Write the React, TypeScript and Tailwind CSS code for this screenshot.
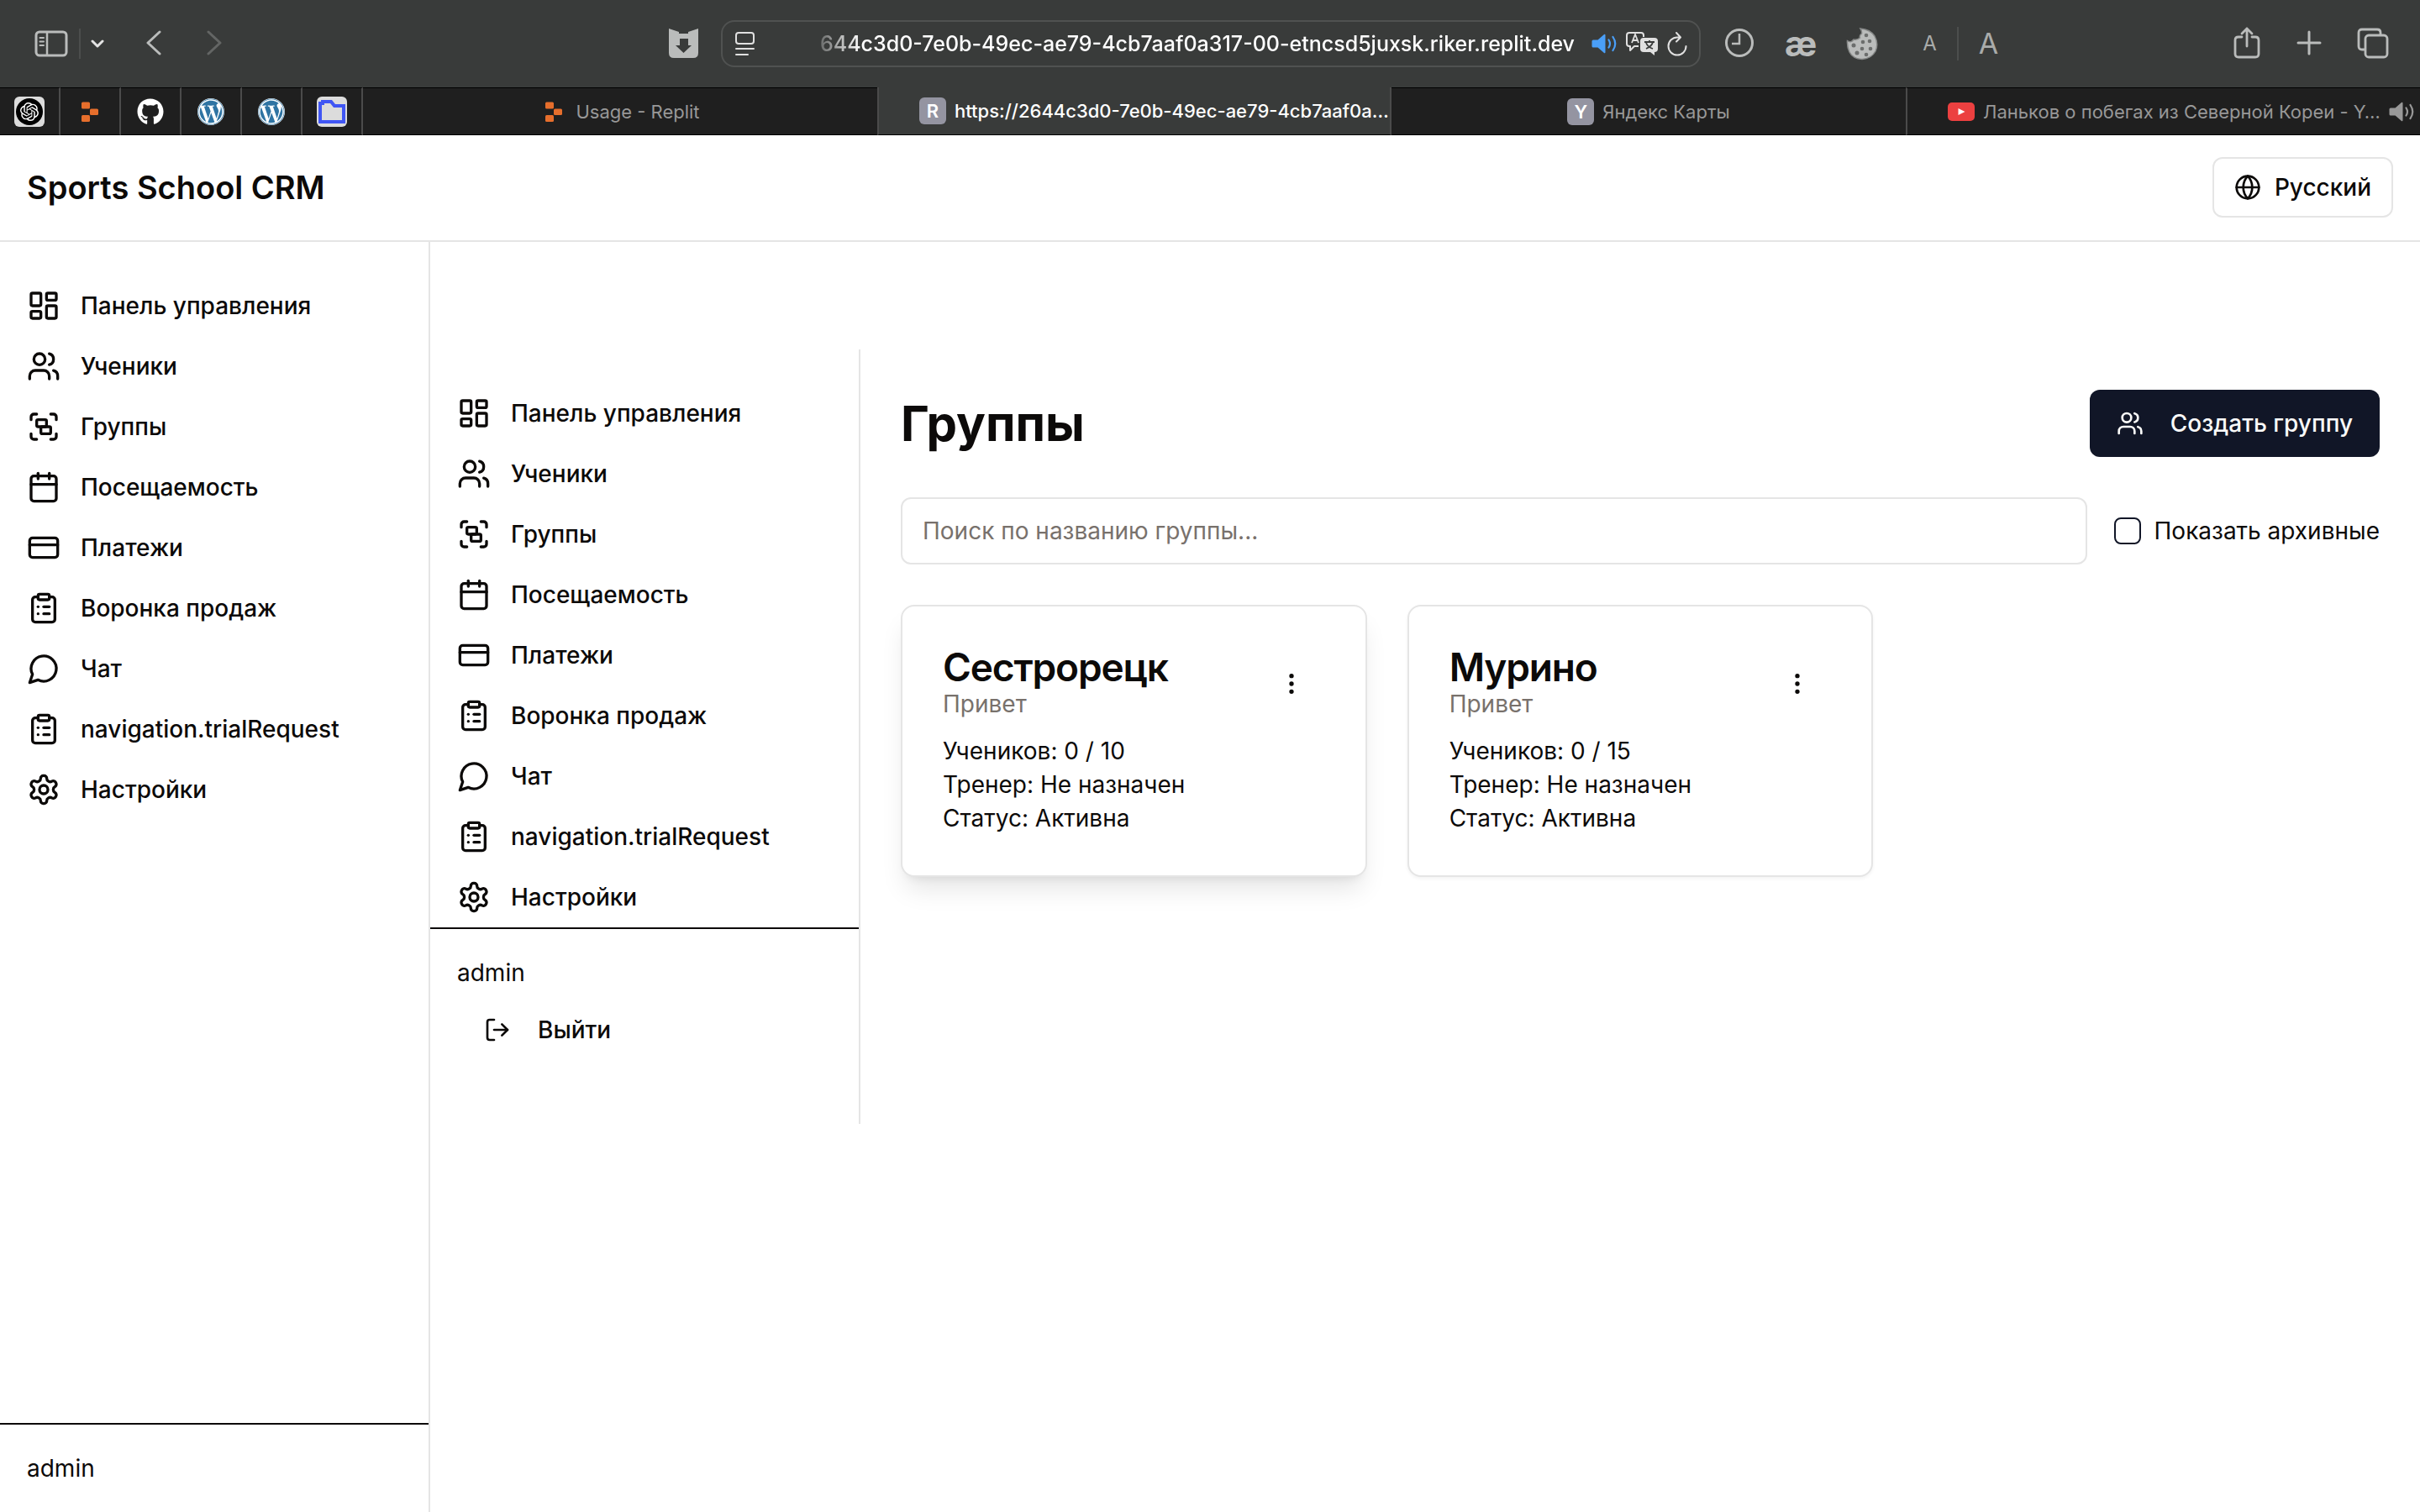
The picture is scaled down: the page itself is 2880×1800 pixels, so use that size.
import type { ReactNode } from "react";
import {
  Calendar,
  ClipboardList,
  CreditCard,
  EllipsisVertical,
  Globe,
  Group,
  LayoutDashboard,
  LogOut,
  Users,
} from "lucide-react";
import { FaGithub, FaWordpress } from "react-icons/fa";

function Stroke({ children, className = "size-10" }: { children: ReactNode; className?: string }) {
  return (
    <svg
      viewBox="0 0 24 24"
      fill="none"
      stroke="currentColor"
      strokeWidth="2"
      strokeLinecap="round"
      strokeLinejoin="round"
      className={className}
      aria-hidden="true"
    >
      {children}
    </svg>
  );
}

function ChatIcon() {
  return (
    <Stroke>
      <path d="M7.9 20A9 9 0 1 0 4 16.1L2 22Z" />
    </Stroke>
  );
}

function GearIcon() {
  return (
    <Stroke>
      <path d="M12.22 2h-.44a2 2 0 0 0-2 2v.18a2 2 0 0 1-1 1.73l-.43.25a2 2 0 0 1-2 0l-.15-.08a2 2 0 0 0-2.73.73l-.22.38a2 2 0 0 0 .73 2.73l.15.1a2 2 0 0 1 1 1.72v.51a2 2 0 0 1-1 1.74l-.15.09a2 2 0 0 0-.73 2.73l.22.38a2 2 0 0 0 2.73.73l.15-.08a2 2 0 0 1 2 0l.43.25a2 2 0 0 1 1 1.73V20a2 2 0 0 0 2 2h.44a2 2 0 0 0 2-2v-.18a2 2 0 0 1 1-1.73l.43-.25a2 2 0 0 1 2 0l.15.08a2 2 0 0 0 2.73-.73l.22-.39a2 2 0 0 0-.73-2.73l-.15-.08a2 2 0 0 1-1-1.74v-.5a2 2 0 0 1 1-1.74l.15-.09a2 2 0 0 0 .73-2.73l-.22-.38a2 2 0 0 0-2.73-.73l-.15.08a2 2 0 0 1-2 0l-.43-.25a2 2 0 0 1-1-1.73V4a2 2 0 0 0-2-2z" />
      <circle cx="12" cy="12" r="3" />
    </Stroke>
  );
}

function OpenAiFavicon() {
  return (
    <span className="grid size-9 place-items-center rounded-md bg-[#dcdcdc]">
      <span className="grid size-8 place-items-center rounded-full bg-black text-white">
        <svg viewBox="0 0 24 24" fill="currentColor" className="size-[22px]" aria-hidden="true">
          <path d="M22.2819 9.8211a5.9847 5.9847 0 0 0-.5157-4.9108 6.0462 6.0462 0 0 0-6.5098-2.9A6.0651 6.0651 0 0 0 4.9807 4.1818a5.9847 5.9847 0 0 0-3.9977 2.9 6.0462 6.0462 0 0 0 .7427 7.0966 5.98 5.98 0 0 0 .511 4.9107 6.051 6.051 0 0 0 6.5146 2.9001A5.9847 5.9847 0 0 0 13.2599 24a6.0557 6.0557 0 0 0 5.7718-4.2058 5.9894 5.9894 0 0 0 3.9977-2.9001 6.0557 6.0557 0 0 0-.7475-7.0729zm-9.022 12.6081a4.4755 4.4755 0 0 1-2.8764-1.0408l.1419-.0804 4.7783-2.7582a.7948.7948 0 0 0 .3927-.6813v-6.7369l2.02 1.1686a.071.071 0 0 1 .038.052v5.5826a4.504 4.504 0 0 1-4.4945 4.4944zm-9.6607-4.1254a4.4708 4.4708 0 0 1-.5346-3.0137l.142.0852 4.783 2.7582a.7712.7712 0 0 0 .7806 0l5.8428-3.3685v2.3324a.0804.0804 0 0 1-.0332.0615L9.74 19.9502a4.4992 4.4992 0 0 1-6.1408-1.6464zM2.3408 7.8956a4.485 4.485 0 0 1 2.3655-1.9728V11.6a.7664.7664 0 0 0 .3879.6765l5.8144 3.3543-2.0201 1.1685a.0757.0757 0 0 1-.071 0l-4.8303-2.7865A4.504 4.504 0 0 1 2.3408 7.872zm16.5963 3.8558L13.1038 8.364 15.1192 7.2a.0757.0757 0 0 1 .071 0l4.8303 2.7913a4.4944 4.4944 0 0 1-.6765 8.1042v-5.6772a.79.79 0 0 0-.407-.667zm2.0107-3.0231l-.142-.0852-4.7735-2.7818a.7759.7759 0 0 0-.7854 0L9.409 9.2297V6.8974a.0662.0662 0 0 1 .0284-.0615l4.8303-2.7866a4.4992 4.4992 0 0 1 6.6802 4.66zM8.3065 12.863l-2.02-1.1638a.0804.0804 0 0 1-.038-.0567V6.0742a4.4992 4.4992 0 0 1 7.3757-3.4537l-.142.0805L8.704 5.459a.7948.7948 0 0 0-.3927.6813zm1.0976-2.3654l2.602-1.4998 2.6069 1.4998v2.9994l-2.5974 1.4997-2.6067-1.4997Z" />
        </svg>
      </span>
    </span>
  );
}

function ReplitFavicon() {
  return (
    <svg viewBox="0 0 32 32" fill="#e66e2c" className="size-8" aria-hidden="true">
      <rect x="6" y="4.500" width="10" height="8" rx="1.500" />
      <rect x="16" y="12.500" width="10" height="7.500" rx="1.500" />
      <rect x="6" y="20" width="10" height="8" rx="1.500" />
    </svg>
  );
}

function WordpressFavicon() {
  return (
    <span className="grid size-8 place-items-center rounded-full bg-white">
      <FaWordpress className="size-8 text-[#2f74a3]" />
    </span>
  );
}

function FolderFavicon() {
  return (
    <span className="grid size-9 place-items-center rounded-md bg-[#dcdcdc]">
      <svg viewBox="0 0 36 36" fill="none" className="size-9" aria-hidden="true">
        <path
          d="M4 30V8h3V6h10l4 5h11v19z"
          fill="none"
          stroke="#4056f4"
          strokeWidth="4"
        />
      </svg>
    </span>
  );
}

function LetterFavicon({ letter }: { letter: string }) {
  return (
    <span className="grid size-8 shrink-0 place-items-center rounded-md bg-[#9494a1] text-[22px] leading-8 font-semibold text-white">
      {letter}
    </span>
  );
}

function YoutubeFavicon() {
  return (
    <svg viewBox="0 0 32 32" className="size-8 shrink-0" aria-hidden="true">
      <rect x="0" y="5" width="32" height="22" rx="5" fill="#ec4040" />
      <path d="M12.500 12v8l8-4z" fill="#fff" />
    </svg>
  );
}

function SpeakerIcon({ className }: { className: string }) {
  return (
    <svg viewBox="0 0 32 32" fill="none" className={className} aria-hidden="true">
      <path d="M2 11.500h5.500L15 5q1.500-.8 1.500 1v20q0 1.800-1.500 1l-7.500-6.500H2q-1.500 0-1.500-1.500v-6q0-1.500 1.500-1.500z" fill="currentColor" />
      <path d="M20.500 11.500q3 4.500 0 9M25.500 8q5.500 8 0 16" stroke="currentColor" strokeWidth="2.200" strokeLinecap="round" />
    </svg>
  );
}

const pinned = [
  { label: "ChatGPT", icon: <OpenAiFavicon /> },
  { label: "Replit", icon: <ReplitFavicon /> },
  { label: "GitHub", icon: <FaGithub className="size-8 text-white" /> },
  { label: "WordPress", icon: <WordpressFavicon /> },
  { label: "WordPress", icon: <WordpressFavicon /> },
  { label: "Files", icon: <FolderFavicon /> },
];

function Toolbar() {
  return (
    <div className="flex h-26 items-center bg-[#393b3a] pr-9 pl-10 text-[#babcbb]">
      <div className="flex w-[756px] items-center">
        <button type="button" aria-label="Sidebar">
          <svg viewBox="0 0 42 36" fill="none" stroke="currentColor" className="h-9 w-[42px]" aria-hidden="true">
            <rect x="3" y="4" width="36" height="28" rx="4" strokeWidth="3" />
            <path d="M16 4v28" strokeWidth="2.500" />
            <path d="M7.500 11h4.500M7.500 15.500h4.500M7.500 20h4.500" strokeWidth="2" strokeLinecap="round" />
          </svg>
        </button>
        <span className="ml-3 h-9 w-0.5 bg-[#4c4e4d]" />
        <button type="button" aria-label="Tab groups" className="ml-3 text-[#e4e4e4]">
          <svg viewBox="0 0 16 16" fill="none" stroke="currentColor" strokeWidth="3" strokeLinecap="round" strokeLinejoin="round" className="size-4" aria-hidden="true">
            <path d="M2 5l6 6 6-6" />
          </svg>
        </button>
        <button type="button" aria-label="Back" className="ml-12">
          <svg viewBox="0 0 24 32" fill="none" stroke="currentColor" strokeWidth="3" strokeLinecap="round" strokeLinejoin="round" className="h-8 w-6" aria-hidden="true">
            <path d="M18 2L4 15l14 13" />
          </svg>
        </button>
        <button type="button" aria-label="Forward" className="ml-12 text-[#636564]">
          <svg viewBox="0 0 24 32" fill="none" stroke="currentColor" strokeWidth="3" strokeLinecap="round" strokeLinejoin="round" className="h-8 w-6" aria-hidden="true">
            <path d="M4 2l14 13L4 28" />
          </svg>
        </button>
      </div>

      <div className="flex items-center">
        <button type="button" aria-label="Downloads shield">
          <svg viewBox="0 0 36 36" className="size-9" aria-hidden="true">
            <path d="M0 0l12 4v2h11V4l12-4v29q0 6-6 6H6q-6 0-6-6z" fill="currentColor" />
            <path d="M13 12h10v8h4l-9.500 9L8 20h5z" fill="#393b3a" />
          </svg>
        </button>
        <div className="ml-6.5 flex h-14 w-[1166px] items-center rounded-2xl border-2 border-[#505251] px-3 text-[#e0e0e0]">
          <svg viewBox="0 0 28 32" fill="none" stroke="currentColor" strokeWidth="2" strokeLinecap="round" className="h-8 w-7" aria-hidden="true">
            <rect x="4" y="3" width="21" height="13" rx="3" />
            <path d="M4 22h21M4 29h14" />
          </svg>
          <input
            type="text"
            aria-label="Address"
            readOnly
            value="644c3d0-7e0b-49ec-ae79-4cb7aaf0a317-00-etncsd5juxsk.riker.replit.dev"
            className="mr-5 ml-15 h-12 min-w-0 flex-1 bg-transparent text-right text-[25px] font-medium text-white outline-none [mask-image:linear-gradient(to_right,transparent,black_64px)]"
          />
          <SpeakerIcon className="size-8 text-[#4a9ff8]" />
          <svg viewBox="0 0 40 32" fill="none" className="ml-2 h-8 w-10" aria-hidden="true">
            <path d="M22 8V6q0-3-3-3H5Q2 3 2 6v10q0 3 3 3h1v5l5-5h5" stroke="currentColor" strokeWidth="2" strokeLinejoin="round" />
            <path d="M8 15l4-10 4 10M9.500 12h5" stroke="currentColor" strokeWidth="1.800" />
            <path d="M22 9h13q4 0 4 4v9q0 4-4 4v4l-5-4h-8q-4 0-4-4v-9q0-4 4-4z" fill="currentColor" />
            <path d="M23 14h12M29 12v2M25 22q7-3 8-8M25 15q2 5 8 7" stroke="#393b3a" strokeWidth="1.800" />
          </svg>
          <svg viewBox="0 0 28 32" fill="none" stroke="currentColor" strokeWidth="2" strokeLinecap="round" strokeLinejoin="round" className="ml-2 h-8 w-7" aria-hidden="true">
            <path d="M18 8.500h-4a10.500 10.500 0 1 0 10.500 10.500M13 3l5 5.500-5 5" />
          </svg>
        </div>
        <button type="button" aria-label="History" className="ml-7">
          <svg viewBox="0 0 36 36" fill="none" stroke="currentColor" strokeWidth="3" className="size-9" aria-hidden="true">
            <circle cx="18" cy="17" r="15.500" />
            <path d="M18 6v12H9" strokeWidth="2.500" />
          </svg>
        </button>
        <button type="button" aria-label="Ligature" className="ml-9 text-[42px] leading-12 font-bold">
          æ
        </button>
        <button type="button" aria-label="Cookies" className="ml-8.5">
          <svg viewBox="0 0 40 40" className="size-10" aria-hidden="true">
            <path
              d="M18 2Q30 3 35 11Q40 20 36 29Q31 38 20 38.500Q9 38 5 30Q2 24 2.500 16.500Q7 19.500 10 15Q14 16 17.500 13Q16.500 10 19.500 8Q20 5 18 2Z"
              fill="currentColor"
              stroke="#858786"
              strokeWidth="1.500"
            />
            <g fill="#6c6e6d">
              <circle cx="25" cy="10" r="2.300" />
              <circle cx="21" cy="18" r="2.300" />
              <circle cx="29" cy="17" r="2.300" />
              <circle cx="10" cy="22" r="2.500" />
              <circle cx="20" cy="26" r="2.300" />
              <circle cx="30" cy="26" r="2.300" />
              <circle cx="14" cy="31" r="2.500" />
              <circle cx="25" cy="33" r="2.300" />
            </g>
          </svg>
        </button>
      </div>

      <div className="ml-13 flex items-center text-[#a9abaa]">
        <button type="button" aria-label="Smaller text" className="text-2xl">
          A
        </button>
        <span className="mx-6 h-10 w-0.5 bg-[#4c4e4d]" />
        <button type="button" aria-label="Larger text" className="text-[34px] leading-10">
          A
        </button>
      </div>

      <div className="ml-auto flex items-center gap-9.5">
        <button type="button" aria-label="Share">
          <svg viewBox="0 0 36 40" fill="none" stroke="currentColor" strokeWidth="2.800" strokeLinecap="round" strokeLinejoin="round" className="h-10 w-9" aria-hidden="true">
            <path d="M12 12H8q-4 0-4 4v16q0 4 4 4h20q4 0 4-4V16q0-4-4-4h-4M18 23V2M12 8l6-6 6 6" />
          </svg>
        </button>
        <button type="button" aria-label="New tab">
          <svg viewBox="0 0 36 36" fill="none" stroke="currentColor" strokeWidth="3" strokeLinecap="round" className="size-9" aria-hidden="true">
            <path d="M18 4v26M5 17h26" />
          </svg>
        </button>
        <button type="button" aria-label="Show tabs">
          <svg viewBox="0 0 40 40" fill="none" stroke="currentColor" strokeWidth="2.800" strokeLinejoin="round" className="size-10" aria-hidden="true">
            <path d="M11 27H7q-4 0-4-4V7q0-4 4-4h18q4 0 4 4v4" />
            <rect x="11" y="10" width="26" height="26" rx="4" />
          </svg>
        </button>
      </div>
    </div>
  );
}

function TabStrip() {
  return (
    <div className="flex h-[57px] text-[22px] leading-8 text-[#989898]">
      {pinned.map((tab, i) => (
        <button
          key={i}
          type="button"
          aria-label={tab.label}
          className="flex w-18 items-center justify-center border-y border-r-2 border-y-black border-r-[#4b4b4b] bg-[#1f1f1f]"
        >
          {tab.icon}
        </button>
      ))}
      <div className="grid min-w-0 flex-1 grid-cols-4">
        <button
          type="button"
          className="flex min-w-0 items-center justify-center gap-2.5 border-y border-black bg-[#1f1f1f]"
        >
          <ReplitFavicon />
          <span>Usage - Replit</span>
        </button>
        <button
          type="button"
          className="flex min-w-0 items-center gap-2.5 border-x-2 border-b border-x-[#4b4b4b] border-b-black bg-[#393b3a] pl-12 font-medium text-white"
        >
          <LetterFavicon letter="R" />
          <span className="whitespace-nowrap">https://2644c3d0-7e0b-49ec-ae79-4cb7aaf0a…</span>
        </button>
        <button
          type="button"
          className="flex min-w-0 items-center justify-center gap-2.5 border-y border-black bg-[#1f1f1f]"
        >
          <LetterFavicon letter="Y" />
          <span>Яндекс Карты</span>
        </button>
        <button
          type="button"
          className="flex min-w-0 items-center gap-2.5 border-y border-l-2 border-y-black border-l-[#4b4b4b] bg-[#1f1f1f] pr-2 pl-12"
        >
          <YoutubeFavicon />
          <span className="whitespace-nowrap">Ланьков о побегах из Северной Кореи - Y…</span>
          <SpeakerIcon className="ml-auto size-8 shrink-0" />
        </button>
      </div>
    </div>
  );
}

const navItems: { label: string; icon: ReactNode }[] = [
  { label: "Панель управления", icon: <LayoutDashboard className="size-10" /> },
  { label: "Ученики", icon: <Users className="size-10" /> },
  { label: "Группы", icon: <Group className="size-10" /> },
  { label: "Посещаемость", icon: <Calendar className="size-10" /> },
  { label: "Платежи", icon: <CreditCard className="size-10" /> },
  { label: "Воронка продаж", icon: <ClipboardList className="size-10" /> },
  { label: "Чат", icon: <ChatIcon /> },
  { label: "navigation.trialRequest", icon: <ClipboardList className="size-10" /> },
  { label: "Настройки", icon: <GearIcon /> },
];

function Sidebar({ children }: { children?: ReactNode }) {
  return (
    <aside className="flex w-128 shrink-0 flex-col border-r-2 border-[#e5e5e5] pt-10">
      <nav className="flex-1">
        {navItems.map((item) => (
          <a key={item.label} href="#" className="flex h-18 items-center gap-6 px-8 text-[28px] leading-10 font-medium">
            {item.icon}
            {item.label}
          </a>
        ))}
      </nav>
      <div className="border-t-2 border-[#0c0a09] p-8">
        <p className="text-[28px] leading-10">admin</p>
        {children}
      </div>
    </aside>
  );
}

function GroupCard({ name, capacity, raised }: { name: string; capacity: number; raised?: boolean }) {
  return (
    <article
      className={
        raised
          ? "rounded-2xl border-2 border-[#e5e5e5] bg-white p-12 shadow-[0_20px_30px_-6px_rgba(0,0,0,0.1),0_8px_12px_-8px_rgba(0,0,0,0.1)]"
          : "rounded-2xl border-2 border-[#e5e5e5] bg-white p-12 shadow-[0_2px_4px_rgba(0,0,0,0.05)]"
      }
    >
      <div className="flex items-center justify-between">
        <div>
          <h3 className="text-[46px] leading-12 font-semibold tracking-tight">{name}</h3>
          <p className="text-[28px] leading-10 text-[#78716c]">Привет</p>
        </div>
        <button type="button" aria-label="Действия" className="grid size-20 place-items-center">
          <EllipsisVertical className="size-8" />
        </button>
      </div>
      <div className="mt-4 text-[28px] leading-10">
        <p>Учеников: 0 / {capacity}</p>
        <p>Тренер: Не назначен</p>
        <p>Статус: Активна</p>
      </div>
    </article>
  );
}

export default function App() {
  return (
    <div className="flex min-h-screen flex-col bg-white font-[Inter,'Liberation_Sans',sans-serif] text-[#0c0a09]">
      <Toolbar />
      <TabStrip />

      <header className="flex h-[127px] items-center justify-between border-b-2 border-[#e5e5e5] px-8 pb-0.5">
        <h1 className="text-[38px] leading-14 font-semibold">Sports School CRM</h1>
        <button
          type="button"
          className="flex h-18 items-center gap-4 rounded-xl border-2 border-[#e5e5e5] px-6 text-[28px] leading-10 font-medium"
        >
          <Globe className="size-8" />
          Русский
        </button>
      </header>

      <div className="flex flex-1">
        <Sidebar />
        <div className="flex flex-1 items-start pt-32">
          <Sidebar>
            <button type="button" className="mt-2 mb-10 flex h-20 items-center gap-8 px-8 text-[28px] leading-10 font-medium">
              <LogOut className="size-8" />
              Выйти
            </button>
          </Sidebar>
          <main className="flex flex-1 flex-col gap-12 p-12">
            <div className="flex items-center justify-between">
              <h2 className="text-[58px] leading-18 font-bold">Группы</h2>
              <button
                type="button"
                className="flex h-20 items-center gap-8 rounded-xl bg-[#111627] px-8 text-[28px] leading-10 font-medium text-[#fafaf9]"
              >
                <Users className="size-8" />
                Создать группу
              </button>
            </div>
            <div className="flex items-center gap-8">
              <input
                type="text"
                aria-label="Поиск по названию группы"
                placeholder="Поиск по названию группы..."
                className="h-20 min-w-0 flex-1 rounded-xl border-2 border-[#e5e5e5] px-6 text-[28px] leading-10 placeholder:text-[#78716c]"
              />
              <label className="flex items-center gap-4 text-[28px] leading-10">
                <input type="checkbox" className="size-8 appearance-none rounded-lg border-2 border-[#111627]" />
                Показать архивные
              </label>
            </div>
            <div className="grid grid-cols-3 gap-12">
              <GroupCard name="Сестрорецк" capacity={10} raised />
              <GroupCard name="Мурино" capacity={15} />
            </div>
          </main>
        </div>
      </div>
    </div>
  );
}
